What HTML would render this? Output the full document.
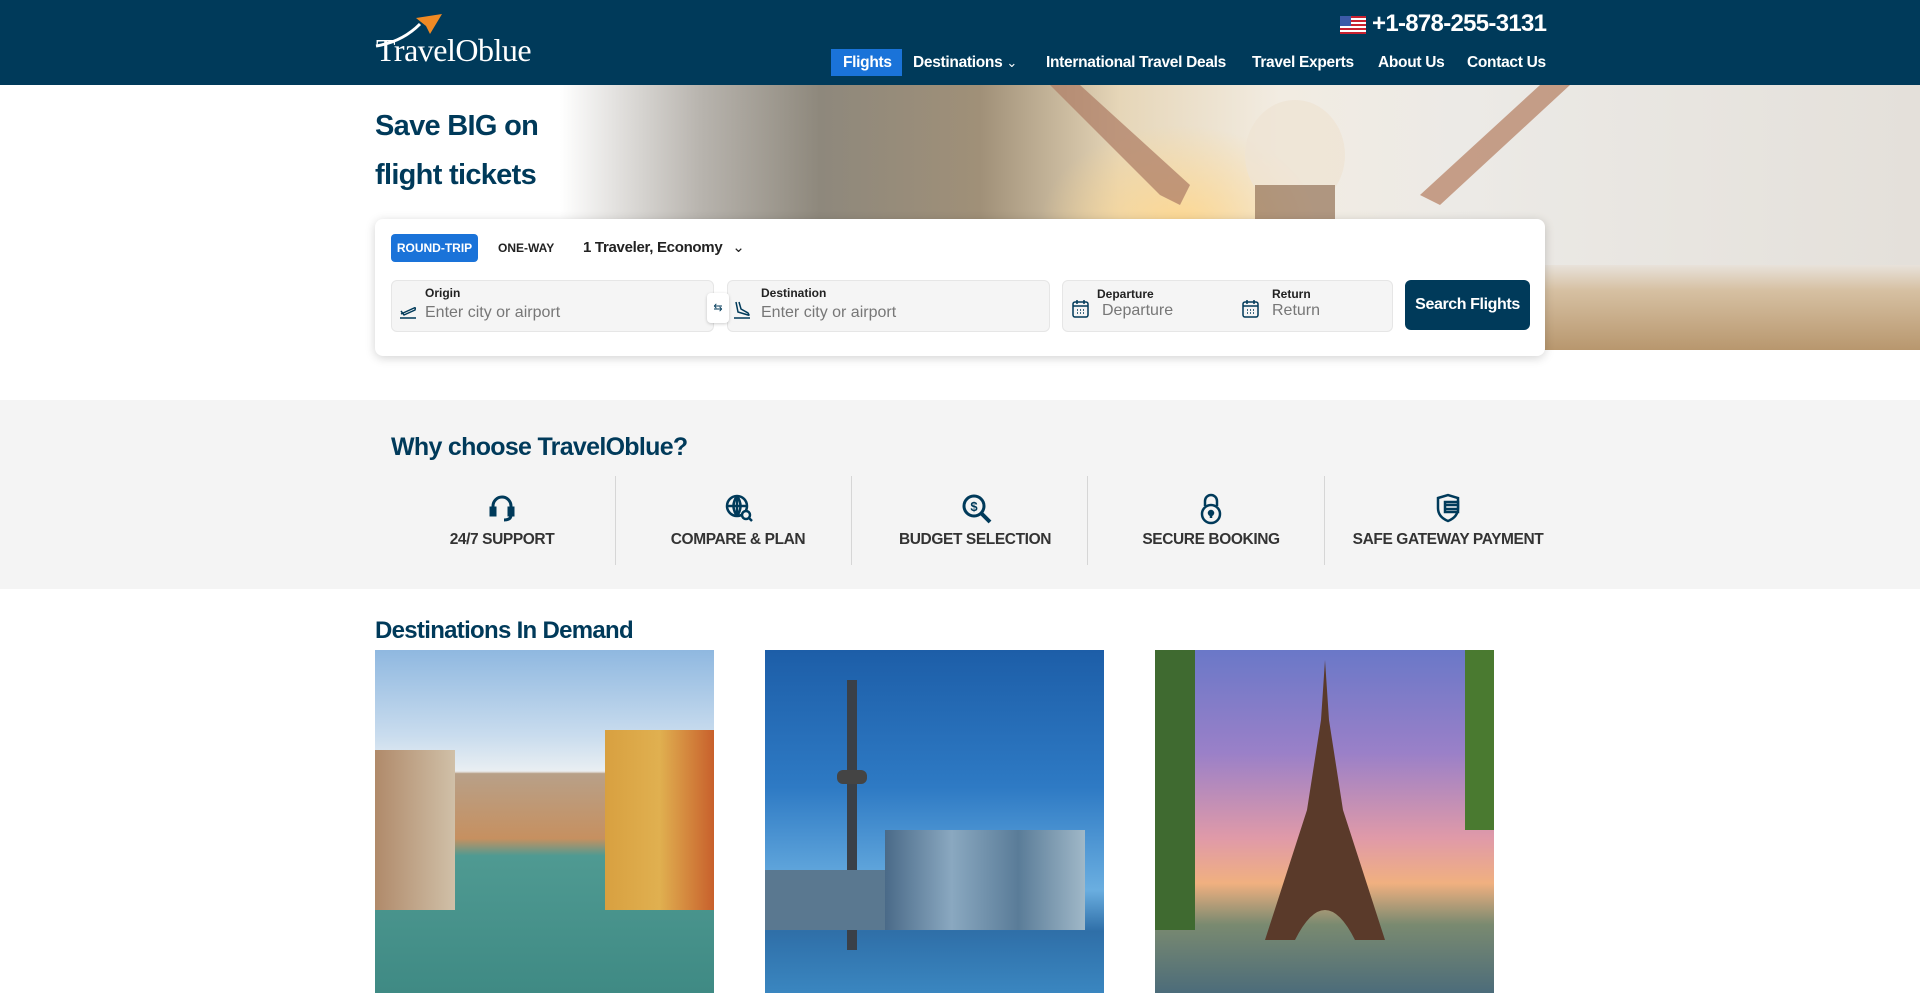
<!DOCTYPE html>
<html><head><meta charset="utf-8"><style>
*{box-sizing:border-box;margin:0;padding:0}
body{width:1920px;height:993px;overflow:hidden;background:#fff;font-family:"Liberation Sans",sans-serif;color:#1e2a33;position:relative}
.hdr{position:absolute;left:0;top:0;width:1920px;height:85px;background:#003a5a}
.abs{position:absolute}
.nav{position:absolute;top:49px;height:27px;line-height:27px;color:#fff;font-size:15.5px;font-weight:bold;letter-spacing:-.3px}
.hero{position:absolute;left:0;top:85px;width:1920px;height:265px;background:#fff;overflow:hidden}
.img{position:absolute;left:560px;top:0;width:1360px;height:265px;
background:
radial-gradient(ellipse 140px 100px at 620px 140px,rgba(255,215,140,.9),rgba(255,210,140,0) 100%),
linear-gradient(90deg,#fff 0,#b8b4ae 140px,#8e887c 260px,#a09078 420px,#e6d6b8 560px,#f2ece2 720px,#eceae6 900px,#e4e0da 1360px)}
.sand{position:absolute;left:1545px;top:180px;width:375px;height:85px;background:linear-gradient(180deg,#e8e2da 0,#d6c0a2 30%,#b8976e 100%)}
.card{position:absolute;left:375px;top:219px;width:1170px;height:137px;background:#fff;border-radius:8px;box-shadow:0 2px 10px rgba(0,0,0,.18)}
.fld{position:absolute;top:61px;height:52px;background:#f5f5f5;border:1px solid #e6e6e6;border-radius:6px}
.lbl{position:absolute;font-size:12px;font-weight:bold;color:#222}
.ph{position:absolute;font-size:16px;color:#777}
.gray{position:absolute;left:0;top:400px;width:1920px;height:189px;background:#f4f4f4}
.item{position:absolute;top:476px;width:236px;height:89px;text-align:center}
.item .t{position:absolute;top:55px;width:100%;font-size:15.5px;font-weight:bold;color:#333;letter-spacing:-.4px}
.item svg{position:absolute;left:104px;top:17px}
.div{position:absolute;top:476px;width:1px;height:89px;background:#d6d6d6}
.dc{position:absolute;top:650px;width:339px;height:343px;overflow:hidden}
</style></head><body>
<div class="hdr"></div>
<svg class="abs" style="left:372px;top:12px" width="70" height="40" viewBox="0 0 70 40">
<path d="M4 34 Q30 30 48 12" stroke="#fff" stroke-width="3" fill="none"/>
<path d="M44 6 L70 2 L58 22 L54 14 Z" fill="#f08a24"/>
</svg>
<div class="abs" style="left:376px;top:32px;font-family:'Liberation Serif',serif;font-size:32px;color:#fff;letter-spacing:-.5px">TravelOblue</div>
<svg class="abs" style="left:1340px;top:16px" width="26" height="18" viewBox="0 0 26 18">
<rect width="26" height="18" fill="#fff"/><g fill="#c8202f"><rect y="0" width="26" height="2"/><rect y="4" width="26" height="2"/><rect y="8" width="26" height="2"/><rect y="12" width="26" height="2"/><rect y="16" width="26" height="2"/></g><rect width="11" height="10" fill="#3c5aa8"/></svg>
<div class="abs" style="left:1372px;top:10px;font-size:24px;color:#fff;font-weight:bold;letter-spacing:-.7px">+1-878-255-3131</div>
<div class="abs" style="left:831px;top:49px;width:71px;height:27px;background:#1a73d9"></div>
<div class="nav" style="left:843px">Flights</div>
<div class="nav" style="left:913px">Destinations <span style="font-weight:normal;font-size:13px">&#8964;</span></div>
<div class="nav" style="left:1046px">International Travel Deals</div>
<div class="nav" style="left:1252px">Travel Experts</div>
<div class="nav" style="left:1378px">About Us</div>
<div class="nav" style="left:1467px">Contact Us</div>

<div class="hero"><div class="img"></div><div class="sand"></div>
<svg class="abs" style="left:1040px;top:0;opacity:.75" width="540" height="140" viewBox="0 0 540 140">
<path d="M10 0 L120 110 L140 120 L150 100 L40 0Z" fill="#b08068"/>
<path d="M530 0 L400 120 L380 110 L500 0Z" fill="#b88468"/>
<ellipse cx="255" cy="70" rx="50" ry="55" fill="#efe4d4"/>
<rect x="215" y="100" width="80" height="40" fill="#9a7a60"/>
</svg>
</div>
<div class="abs" style="left:375px;top:110px;font-size:29px;font-weight:bold;color:#003a5a;letter-spacing:-.7px">Save BIG on</div>
<div class="abs" style="left:375px;top:159px;font-size:29px;font-weight:bold;color:#003a5a;letter-spacing:-.7px">flight tickets</div>

<div class="card">
<div class="abs" style="left:16px;top:15px;width:87px;height:28px;background:#1a73d9;border-radius:4px;color:#fff;font-size:12px;font-weight:bold;line-height:28px;text-align:center">ROUND-TRIP</div>
<div class="abs" style="left:123px;top:22px;font-size:12px;font-weight:bold;color:#222">ONE-WAY</div>
<div class="abs" style="left:208px;top:19px;font-size:15px;font-weight:bold;color:#222;letter-spacing:-.3px">1 Traveler, Economy <span style="font-weight:normal;margin-left:6px">&#8964;</span></div>
<div class="fld" style="left:16px;width:323px"></div>
<div class="fld" style="left:352px;width:323px"></div>
<div class="fld" style="left:687px;width:331px"></div>
<div class="abs" style="left:332px;top:74px;width:22px;height:30px;background:#fff;border-radius:4px;box-shadow:0 1px 3px rgba(0,0,0,.2);font-size:11px;text-align:center;line-height:30px;color:#003a5a">&#8646;</div>
<div class="lbl" style="left:50px;top:67px">Origin</div>
<div class="ph" style="left:50px;top:85px">Enter city or airport</div>
<div class="lbl" style="left:386px;top:67px">Destination</div>
<div class="ph" style="left:386px;top:85px">Enter city or airport</div>
<div class="lbl" style="left:722px;top:68px">Departure</div>
<div class="ph" style="left:727px;top:83px">Departure</div>
<div class="lbl" style="left:897px;top:68px">Return</div>
<div class="ph" style="left:897px;top:83px">Return</div>
<svg class="abs" style="left:24px;top:83px" width="18" height="18" viewBox="0 0 18 18" fill="none" stroke="#003a5a" stroke-width="1.5"><path d="M2 12 L15 6 Q17 5 16 8 L5 13 L2 9 M1 16 H17"/></svg>
<svg class="abs" style="left:358px;top:81px" width="18" height="20" viewBox="0 0 18 20" fill="none" stroke="#003a5a" stroke-width="1.5"><path d="M3 2 L5 12 L15 15 Q17 16 15 13 L8 9 L6 2 M1 18 H17"/></svg>
<svg class="abs" style="left:697px;top:80px" width="17" height="20" viewBox="0 0 17 20" fill="none" stroke="#003a5a" stroke-width="1.5"><rect x="1" y="3" width="15" height="15" rx="2"/><path d="M1 7 H16 M5 1 V5 M12 1 V5"/><path d="M5 11h1M8 11h1M11 11h1M5 14h1M8 14h1M11 14h1"/></svg>
<svg class="abs" style="left:867px;top:80px" width="17" height="20" viewBox="0 0 17 20" fill="none" stroke="#003a5a" stroke-width="1.5"><rect x="1" y="3" width="15" height="15" rx="2"/><path d="M1 7 H16 M5 1 V5 M12 1 V5"/><path d="M5 11h1M8 11h1M11 11h1M5 14h1M8 14h1M11 14h1"/></svg>
<div class="abs" style="left:1030px;top:61px;width:125px;height:50px;background:#003a5a;border-radius:6px;color:#fff;font-size:16px;font-weight:bold;text-align:center;line-height:50px;letter-spacing:-.4px">Search Flights</div>
</div>

<div class="gray"></div>
<div class="abs" style="left:391px;top:433px;font-size:25px;font-weight:bold;color:#003a5a;letter-spacing:-.7px">Why choose TravelOblue?</div>
<div class="item" style="left:384px"><svg width="28" height="30" viewBox="0 0 28 30" fill="none" stroke="#003a5a" stroke-width="3"><path d="M5 18 V13 A9 9 0 0 1 23 13 V18"/><rect x="3" y="15" width="4" height="7" fill="#003a5a"/><rect x="21" y="15" width="4" height="7" fill="#003a5a"/><path d="M23 22 Q23 27 16 27"/></svg><div class="t">24/7 SUPPORT</div></div>
<div class="div" style="left:615px"></div>
<div class="item" style="left:620px"><svg width="30" height="30" viewBox="0 0 30 30" fill="none" stroke="#003a5a" stroke-width="2.5"><circle cx="13" cy="13" r="10"/><path d="M3 13 H23 M13 3 V23 M13 3 Q6 13 13 23 M13 3 Q20 13 13 23"/><circle cx="22" cy="22" r="4" fill="#f4f4f4"/><path d="M25 25 L28 28"/></svg><div class="t">COMPARE &amp; PLAN</div></div>
<div class="div" style="left:851px"></div>
<div class="item" style="left:857px"><svg width="32" height="32" viewBox="0 0 32 32" fill="none" stroke="#003a5a" stroke-width="3"><circle cx="13" cy="13" r="10"/><path d="M20 20 L29 29" stroke-width="4"/><text x="13" y="18" font-size="13" font-weight="bold" fill="#003a5a" stroke="none" text-anchor="middle" font-family="Liberation Sans">$</text></svg><div class="t">BUDGET SELECTION</div></div>
<div class="div" style="left:1087px"></div>
<div class="item" style="left:1093px"><svg width="28" height="32" viewBox="0 0 28 32" fill="none" stroke="#003a5a" stroke-width="2.5"><path d="M8 13 V8 A6 6 0 0 1 20 8 V13"/><circle cx="14" cy="21" r="9"/><circle cx="14" cy="20" r="2" fill="#003a5a"/><path d="M14 21 V25"/></svg><div class="t">SECURE BOOKING</div></div>
<div class="div" style="left:1324px"></div>
<div class="item" style="left:1330px"><svg width="28" height="30" viewBox="0 0 28 30" fill="none" stroke="#003a5a" stroke-width="2.5"><path d="M4 5 L14 2 L24 5 V15 Q24 24 14 28 Q4 24 4 15 Z"/><rect x="11" y="9" width="13" height="10" fill="#f4f4f4"/><path d="M11 12 H24 M11 16 H24"/></svg><div class="t">SAFE GATEWAY PAYMENT</div></div>

<div class="abs" style="left:375px;top:617px;font-size:24px;font-weight:bold;color:#003a5a;letter-spacing:-.7px">Destinations In Demand</div>
<div class="dc" style="left:375px;background:linear-gradient(180deg,#8fb8e0 0,#c9dcee 25%,#e8eef2 35%,rgba(0,0,0,0) 36%),linear-gradient(180deg,#fff 0,#fff 35%,#b8a088 36%,#c69060 55%,#4f9a92 60%,#3f8a84 100%)">
<div class="abs" style="left:230px;top:80px;width:109px;height:180px;background:linear-gradient(90deg,#d8a040,#e0b050,#c8602c)"></div>
<div class="abs" style="left:0;top:100px;width:80px;height:160px;background:linear-gradient(90deg,#b08a6a,#d0c0a8)"></div>
</div>
<div class="dc" style="left:765px;background:linear-gradient(180deg,#1d5ea8 0,#2e7ac4 40%,#6aaee0 70%,#2f6fa8 82%,#3a86c0 100%)">
<div class="abs" style="left:82px;top:30px;width:10px;height:270px;background:#3a4048"></div>
<div class="abs" style="left:72px;top:120px;width:30px;height:14px;border-radius:6px;background:#444"></div>
<div class="abs" style="left:120px;top:180px;width:200px;height:100px;background:linear-gradient(90deg,#4a6a88,#8aa8c0,#5a7c98,#a0b8c8)"></div>
<div class="abs" style="left:0;top:220px;width:120px;height:60px;background:#5a7890"></div>
</div>
<div class="dc" style="left:1155px;background:linear-gradient(180deg,#6a78c8 0,#9a80c8 30%,#e09aa8 55%,#f0b080 68%,#7a8a70 80%,#4c6c7a 100%)">
<div class="abs" style="left:0;top:0;width:40px;height:280px;background:#3f6a30"></div>
<div class="abs" style="left:310px;top:0;width:29px;height:180px;background:#4a7a30"></div>
<svg class="abs" style="left:100px;top:10px" width="140" height="280" viewBox="0 0 140 280"><path d="M70 0 L74 60 L88 150 L130 280 L100 280 Q70 220 40 280 L10 280 L52 150 L66 60 Z" fill="#5a3a2a"/></svg>
</div>
</body></html>
